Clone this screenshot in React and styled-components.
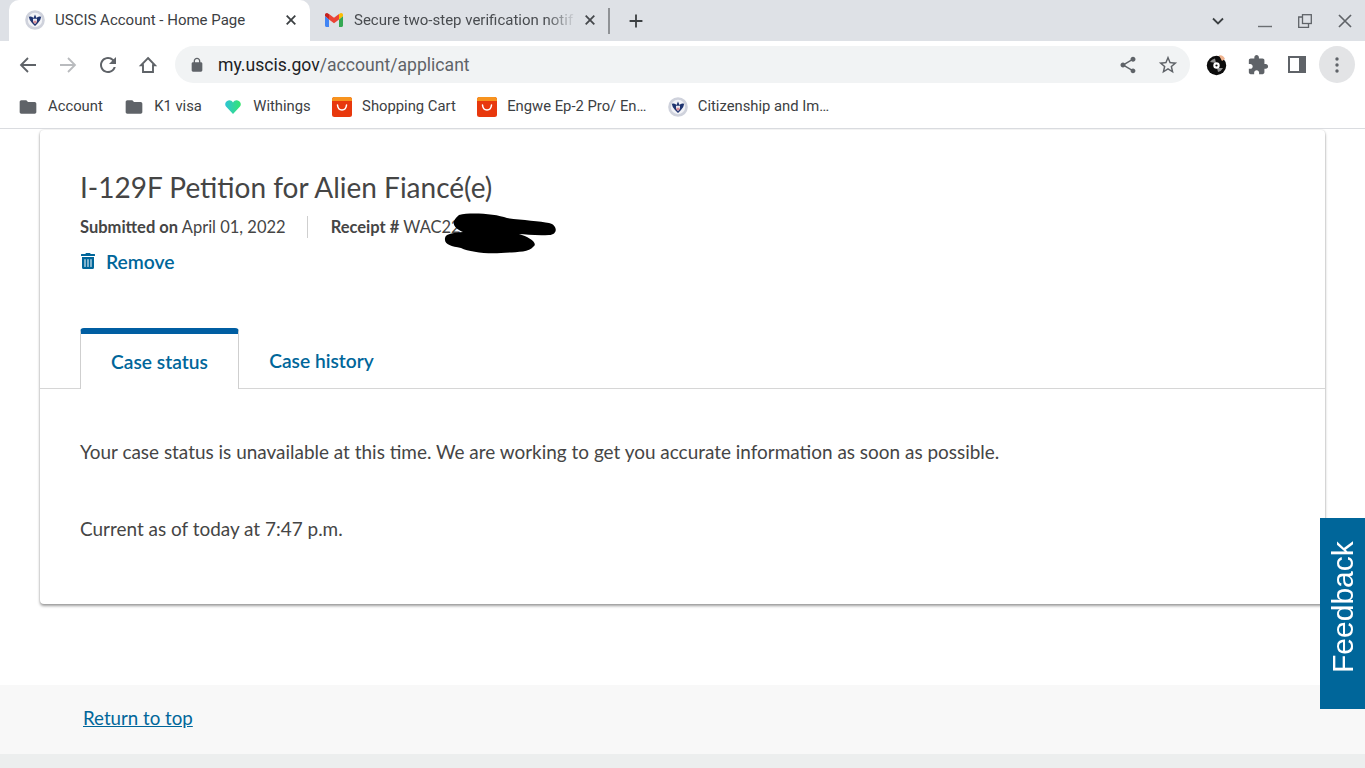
import React from 'react'
import styled, { createGlobalStyle } from 'styled-components'
import { FaTrashAlt } from 'react-icons/fa'

const GlobalStyle = createGlobalStyle`
    html, body {
        margin: 0;
        padding: 0;
        height: 768px;
        overflow: hidden;
        background: #fff;
    }
    * {
        box-sizing: border-box;
    }
`;

const Material = ({ d, size = 24, color = '#5f6368' }) => (
    <svg width={size} height={size} viewBox="0 0 24 24" fill={color}><path d={d} /></svg>
);

const paths = {
    refresh: 'M17.65 6.35A7.958 7.958 0 0 0 12 4c-4.42 0-7.99 3.58-7.99 8s3.57 8 7.99 8c3.73 0 6.84-2.55 7.73-6h-2.08A5.99 5.99 0 0 1 12 18c-3.31 0-6-2.69-6-6s2.69-6 6-6c1.66 0 3.14.69 4.22 1.78L13 11h7V4l-2.35 2.35z',
    lock: 'M18 8h-1V6c0-2.76-2.24-5-5-5S7 3.24 7 6v2H6c-1.1 0-2 .9-2 2v10c0 1.1.9 2 2 2h12c1.1 0 2-.9 2-2V10c0-1.1-.9-2-2-2zM9 6c0-1.66 1.34-3 3-3s3 1.34 3 3v2H9V6z',
    share: 'M18 16.08c-.76 0-1.44.3-1.96.77L8.91 12.7c.05-.23.09-.46.09-.7s-.04-.47-.09-.7l7.05-4.11c.54.5 1.25.81 2.04.81 1.66 0 3-1.34 3-3s-1.34-3-3-3-3 1.34-3 3c0 .24.04.47.09.7L8.04 9.81C7.5 9.31 6.79 9 6 9c-1.66 0-3 1.34-3 3s1.34 3 3 3c.79 0 1.5-.31 2.04-.81l7.12 4.16c-.05.21-.08.43-.08.65 0 1.61 1.31 2.92 2.92 2.92 1.61 0 2.92-1.31 2.92-2.92s-1.31-2.92-2.92-2.92z',
    star: 'M22 9.24l-7.19-.62L12 2 9.19 8.63 2 9.24l5.46 4.73L5.82 21 12 17.27 18.18 21l-1.63-7.03L22 9.24zM12 15.4l-3.76 2.27 1-4.28-3.32-2.88 4.38-.38L12 6.1l1.71 4.04 4.38.38-3.32 2.88 1 4.28L12 15.4z',
    puzzle: 'M20.5 11H19V7c0-1.1-.9-2-2-2h-4V3.5C13 2.12 11.88 1 10.5 1S8 2.12 8 3.5V5H4c-1.1 0-1.99.9-1.99 2v3.8H3.5c1.49 0 2.7 1.21 2.7 2.7s-1.21 2.7-2.7 2.7H2V20c0 1.1.9 2 2 2h3.8v-1.5c0-1.49 1.21-2.7 2.7-2.7 1.49 0 2.7 1.21 2.7 2.7V22H17c1.1 0 2-.9 2-2v-4h1.5c1.38 0 2.5-1.12 2.5-2.5S21.88 11 20.5 11z',
    folder: 'M10 4H4c-1.1 0-1.99.9-1.99 2L2 18c0 1.1.9 2 2 2h16c1.1 0 2-.9 2-2V8c0-1.1-.9-2-2-2h-8l-2-2z',
};

const Seal = ({ size = 20 }) => (
    <svg width={size} height={size} viewBox="0 0 20 20">
        <circle cx="10" cy="10" r="9.8" fill="#cfd2dc" />
        <circle cx="10" cy="10" r="7.2" fill="#f2f3f7" />
        <path d="M3.800 6.800 Q7 5.800 8.500 8 L10 4.500 L11.500 8 Q13 5.800 16.200 6.800 Q15.600 11 13 13 L10 16 L7 13 Q4.400 11 3.800 6.800 Z" fill="#1f3470" />
        <path d="M8 8.800 h4 v3 l-2 2.400 l-2 -2.400 Z" fill="#e9ebf2" />
        <path d="M8.700 10.700 h0.800 v2.600 h-0.800 Z M10.500 10.700 h0.800 v2.600 h-0.800 Z" fill="#c8313e" />
    </svg>
);

const GmailIcon = () => (
    <svg width="18" height="14" viewBox="0 0 18 14">
        <path d="M0 3v9.500C0 13.300.7 14 1.500 14H4V6.500Z" fill="#4285f4" />
        <path d="M14 6.500V14h2.500c.8 0 1.500-.7 1.500-1.500V3Z" fill="#34a853" />
        <path d="M14 1v5.500L18 3V1.800C18 .3 16.300 -.5 15.100 .4Z" fill="#fbbc04" />
        <path d="M4 6.500V1l5 3.700L14 1v5.500L9 10.200Z" fill="#ea4335" />
        <path d="M0 1.800V3l4 3.500V1L2.900 .4C1.700 -.5 0 .3 0 1.800Z" fill="#c5221f" />
    </svg>
);

const HeartIcon = () => (
    <svg width="16" height="14" viewBox="0 0 16 14">
        <defs>
            <linearGradient id="heartFill" x1="0" y1="0" x2="1" y2="0">
                <stop offset="0" stopColor="#2ec4d6" />
                <stop offset="1" stopColor="#35e56f" />
            </linearGradient>
        </defs>
        <path d="M8 14 L1 6.600 C-.6 4.600 .2 1 3.500 .4 C5.500 .1 7 1 8 2.500 C9 1 10.500 .1 12.500 .4 C15.800 1 16.600 4.600 15 6.600 Z" fill="url(#heartFill)" />
    </svg>
);

const ShopIcon = () => (
    <svg width="20" height="20" viewBox="0 0 20 20">
        <rect width="20" height="20" rx="2.500" fill="#e8380d" />
        <path d="M0 2.500 A2.500 2.500 0 0 1 2.500 0 H17.500 A2.500 2.500 0 0 1 20 2.500 V4 H0 Z" fill="#f7931e" />
        <path d="M5.500 8 C6 14.500 14 14.500 14.500 8" fill="none" stroke="#fff" strokeWidth="1.500" strokeLinecap="round" />
    </svg>
);

const DiscIcon = () => (
    <svg width="22" height="22" viewBox="0 0 22 22">
        <circle cx="10.500" cy="11.500" r="9.700" fill="#0c0c0c" />
        <path d="M4 8 A7.500 7.500 0 0 1 9 4.500 L10 9 Z M17 14 A7.500 7.500 0 0 1 12 18 L11 14 Z" fill="#8e8e8e" />
        <path d="M13 1.500 C15 .5 18 2 19 5 L16 7 Z" fill="#efb38f" />
        <circle cx="10.500" cy="11.500" r="3.200" fill="#fff" />
        <circle cx="10.500" cy="11.500" r="1.100" fill="#0c0c0c" />
    </svg>
);

const HomeIcon = () => (
    <svg width="20" height="20" viewBox="0 0 20 20" fill="none" stroke="#5f6368" strokeWidth="1.900" strokeLinejoin="miter">
        <path d="M10 3 L17 10.300 H15 V17 H5 V10.300 H3 Z" />
    </svg>
);

const Arrow = ({ color = '#5f6368', flip }) => (
    <svg width="20" height="20" viewBox="0 0 20 20" fill="none" stroke={color} strokeWidth="1.800" style={flip ? { transform: 'scaleX(-1)' } : undefined}>
        <path d="M18 10 H3 M10 3 L3 10 L10 17" />
    </svg>
);

const CloseGlyph = ({ size = 10, color = '#3c4043', width = 1.8 }) => (
    <svg width={size} height={size} viewBox="0 0 10 10" stroke={color} strokeWidth={width}>
        <path d="M.7 .7 L9.300 9.300 M9.300 .7 L.7 9.300" />
    </svg>
);

const Panel = () => (
    <svg width="18" height="17" viewBox="0 0 18 17">
        <path fillRule="evenodd" d="M0 0H18V17H0Z M2 2V15H11V2Z" fill="#5f6368" />
    </svg>
);

function App() {
    const bookmarks = [
        { icon: <Material d={paths.folder} size={22} />, label: 'Account' },
        { icon: <Material d={paths.folder} size={22} />, label: 'K1 visa' },
        { icon: <HeartIcon />, label: 'Withings' },
        { icon: <ShopIcon />, label: 'Shopping Cart' },
        { icon: <ShopIcon />, label: 'Engwe Ep-2 Pro/ En…' },
        { icon: <Seal />, label: 'Citizenship and Im…' },
    ];
    return (
        <>
            <GlobalStyle />
            <Browser>
                <TabStrip>
                    <ActiveTab>
                        <Seal />
                        <TabTitle>USCIS Account - Home Page</TabTitle>
                        <TabClose><CloseGlyph /></TabClose>
                    </ActiveTab>
                    <InactiveTab>
                        <GmailIcon />
                        <TabTitle muted>Secure two-step verification notif</TabTitle>
                        <TabClose><CloseGlyph color="#45484c" /></TabClose>
                    </InactiveTab>
                    <TabDivider />
                    <NewTab>
                        <Material d="M19 13h-6v6h-2v-6H5v-2h6V5h2v6h6v2z" color="#3c4043" size={22} />
                    </NewTab>
                    <WindowControls>
                        <ChevronBox>
                            <svg width="12" height="8" viewBox="0 0 12 8" fill="none" stroke="#3c4043" strokeWidth="1.800"><path d="M1 1.500 L6 6.500 L11 1.500" /></svg>
                        </ChevronBox>
                        <WindowButton>
                            <svg width="14" height="14" viewBox="0 0 14 14" stroke="#6b6e72" strokeWidth="1.400"><path d="M0 12.500 H14" /></svg>
                        </WindowButton>
                        <WindowButton>
                            <svg width="14" height="14" viewBox="0 0 14 14" fill="none" stroke="#5f6368" strokeWidth="1.300"><rect x="4.500" y=".7" width="8.800" height="8.800" /><path d="M4.500 3 H.7 V13.300 H10.500 V9.500" /></svg>
                        </WindowButton>
                        <WindowButton>
                            <CloseGlyph size={14} color="#5f6368" width={1.200} />
                        </WindowButton>
                    </WindowControls>
                </TabStrip>
                <Toolbar>
                    <ToolButton><Arrow /></ToolButton>
                    <ToolButton><Arrow color="#b9bbbe" flip /></ToolButton>
                    <ToolButton><Material d={paths.refresh} /></ToolButton>
                    <ToolButton><HomeIcon /></ToolButton>
                    <AddressBar>
                        <LockBox><Material d={paths.lock} size={16} /></LockBox>
                        <Url>my.uscis.gov<UrlPath>/account/applicant</UrlPath></Url>
                        <ToolButton><Material d={paths.share} size={20} /></ToolButton>
                        <ToolButton><Material d={paths.star} size={22} /></ToolButton>
                    </AddressBar>
                    <ToolButton><DiscIcon /></ToolButton>
                    <PuzzleButton><Material d={paths.puzzle} size={22} /></PuzzleButton>
                    <ToolButton><Panel /></ToolButton>
                    <MenuButton>
                        <svg width="4" height="16" viewBox="0 0 4 16" fill="#5f6368">
                            <circle cx="2" cy="2" r="1.700" /><circle cx="2" cy="8" r="1.700" /><circle cx="2" cy="14" r="1.700" />
                        </svg>
                    </MenuButton>
                </Toolbar>
                <BookmarkBar>
                    {bookmarks.map((item) => (
                        <Bookmark key={item.label}>
                            <BookmarkIcon>{item.icon}</BookmarkIcon>
                            <BookmarkLabel>{item.label}</BookmarkLabel>
                        </Bookmark>
                    ))}
                </BookmarkBar>
            </Browser>
            <Page>
                <Card>
                    <CardHead>
                        <Title>I-129F Petition for Alien Fiancé(e)</Title>
                        <MetaRow>
                            <MetaItem><strong>Submitted on</strong> April 01, 2022</MetaItem>
                            <MetaDivider />
                            <MetaItem>
                                <strong>Receipt #</strong> WAC229
                                <Scribble width="120" height="48" viewBox="0 0 120 48">
                                    <path d="M18 6 C30 3 55 5 66 9 C80 11 100 12 108 14 C117 16 117 26 108 26 C95 27 85 25 78 25 C88 28 98 34 92 38 C88 44 70 43 60 44 C45 45 28 43 20 39 C10 37 3 36 4 29 C5 24 14 24 22 23 C14 20 8 14 18 6 Z" fill="#000" />
                                </Scribble>
                            </MetaItem>
                        </MetaRow>
                        <RemoveLink><FaTrashAlt size={16} /> Remove</RemoveLink>
                    </CardHead>
                    <TabRow>
                        <CaseTab active>Case status</CaseTab>
                        <CaseTab>Case history</CaseTab>
                    </TabRow>
                    <CardBody>
                        <BodyText>Your case status is unavailable at this time. We are working to get you accurate information as soon as possible.</BodyText>
                        <BodyText>Current as of today at 7:47 p.m.</BodyText>
                    </CardBody>
                </Card>
            </Page>
            <ReturnBand>
                <ReturnLink href="#top">Return to top</ReturnLink>
            </ReturnBand>
            <FooterStrip />
            <FeedbackTab>Feedback</FeedbackTab>
        </>
    )
}

const Browser = styled.div`
    font-family: Roboto, "Liberation Sans", sans-serif;
    border-bottom: 1px solid #dadce0;
    height: 129px;
`;
const TabStrip = styled.div`
    display: flex;
    align-items: flex-end;
    height: 41px;
    background: #dee1e6;
    padding-left: 9px;
`;
const ActiveTab = styled.div`
    display: flex;
    align-items: center;
    width: 301px;
    height: 41px;
    padding: 0 14px 1px 16px;
    background: #fff;
    border-radius: 10px 10px 0 0;
    color: #3c4043;
`;
const InactiveTab = styled.div`
    display: flex;
    align-items: center;
    width: 298px;
    height: 41px;
    padding: 0 13px 1px 15px;
    overflow: hidden;
`;
const TabTitle = styled.span`
    flex: 1;
    margin-left: ${(props) => (props.muted ? '11px' : '10px')};
    font-size: 15px;
    white-space: nowrap;
    overflow: hidden;
    color: ${(props) => (props.muted ? '#494c50' : '#3c4043')};
    mask-image: ${(props) => (props.muted ? 'linear-gradient(90deg, #000 86%, transparent 100%)' : 'none')};
`;
const TabClose = styled.span`
    display: flex;
    margin-left: 8px;
`;
const TabDivider = styled.div`
    width: 2px;
    height: 26px;
    margin: 0 0 7px 0;
    background: #8f9296;
`;
const NewTab = styled.div`
    display: flex;
    margin: 0 0 9px 15px;
`;
const WindowControls = styled.div`
    display: flex;
    align-items: center;
    height: 41px;
    margin-left: auto;
`;
const ChevronBox = styled.div`
    display: flex;
    justify-content: center;
    width: 40px;
    margin-right: 7px;
`;
const WindowButton = styled.div`
    display: flex;
    justify-content: center;
    width: 40px;
`;
const Toolbar = styled.div`
    display: flex;
    align-items: center;
    height: 47px;
    padding-left: 8px;
    background: #fff;
`;
const ToolButton = styled.div`
    display: flex;
    align-items: center;
    justify-content: center;
    flex: none;
    width: 40px;
    height: 36px;
`;
const PuzzleButton = styled(ToolButton)`
    padding-left: 2px;
`;
const AddressBar = styled.div`
    display: flex;
    align-items: center;
    flex: none;
    width: 1015px;
    height: 37px;
    margin: 0 7px;
    padding-right: 2px;
    background: #f1f3f4;
    border-radius: 19px;
`;
const LockBox = styled.div`
    display: flex;
    width: 43px;
    padding-left: 14px;
`;
const Url = styled.div`
    flex: 1;
    font-size: 17.6px;
    color: #202124;
`;
const UrlPath = styled.span`
    color: #5f6368;
`;
const MenuButton = styled.div`
    display: flex;
    align-items: center;
    justify-content: center;
    width: 36px;
    height: 37px;
    margin-left: 2px;
    background: #e3e4e6;
    border-radius: 50%;
`;
const BookmarkBar = styled.div`
    display: flex;
    align-items: center;
    gap: 21.4px;
    height: 40px;
    padding-left: 18px;
    background: #fff;
    font-size: 14.8px;
    color: #3c4043;
`;
const Bookmark = styled.div`
    display: flex;
    align-items: center;
    gap: 10px;
    white-space: nowrap;
`;
const BookmarkIcon = styled.span`
    display: flex;
    align-items: center;
    justify-content: center;
    width: 20px;
    margin-top: -3px;
`;
const BookmarkLabel = styled.span`
    margin-top: -4px;
`;
const Page = styled.div`
    height: 556px;
    padding: 1px 40px 0;
    font-family: Lato, "Open Sans", sans-serif;
    color: #454545;
`;
const Card = styled.div`
    display: flex;
    flex-direction: column;
    height: 474px;
    background: #fff;
    border-radius: 4px;
    box-shadow: 0 2px 3px rgba(0, 0, 0, 0.38), 0 0 2px rgba(0, 0, 0, 0.14);
`;
const CardHead = styled.div`
    padding: 39px 40px 0;
`;
const Title = styled.h1`
    margin: 0;
    font-size: 28px;
    line-height: 36px;
    font-weight: 400;
`;
const MetaRow = styled.div`
    display: flex;
    align-items: center;
    height: 22px;
    margin-top: 11px;
    font-size: 16.5px;
`;
const MetaItem = styled.div`
    position: relative;
    white-space: nowrap;
    strong {
        font-weight: 700;
    }
`;
const MetaDivider = styled.div`
    width: 1px;
    height: 22px;
    margin: 0 23px 0 21px;
    background: #cfcfcf;
`;
const Scribble = styled.svg`
    position: absolute;
    left: 110px;
    top: -8px;
`;
const RemoveLink = styled.a`
    display: flex;
    align-items: center;
    gap: 10px;
    height: 24px;
    margin-top: 11px;
    font-size: 19.3px;
    font-weight: 600;
    color: #00669a;
`;
const TabRow = styled.div`
    display: flex;
    height: 61px;
    margin-top: 55px;
    padding-left: 40px;
    border-bottom: 1px solid #d6d6d6;
`;
const CaseTab = styled.div`
    display: flex;
    align-items: center;
    justify-content: center;
    height: ${(props) => (props.active ? '61px' : '60px')};
    width: ${(props) => (props.active ? '159px' : '165px')};
    padding-top: ${(props) => (props.active ? '0' : '5px')};
    font-size: 19.2px;
    font-weight: 600;
    color: #00669a;
    background: #fff;
    border-radius: 4px 4px 0 0;
    ${(props) => props.active && `
        border: 1px solid #cfcfcf;
        border-top: 6px solid #005ea2;
        border-bottom: 0;
    `}
`;
const CardBody = styled.div`
    padding: 50px 40px 0;
`;
const BodyText = styled.p`
    margin: 0 0 52px;
    font-size: 18.95px;
    line-height: 25px;
`;
const ReturnBand = styled.div`
    display: flex;
    align-items: center;
    height: 69px;
    padding: 0 0 3px 83px;
    background: #f8f8f8;
    font-family: Lato, "Open Sans", sans-serif;
`;
const ReturnLink = styled.a`
    font-size: 18.7px;
    color: #00669a;
    text-decoration: underline;
`;
const FooterStrip = styled.div`
    height: 14px;
    background: #eceeee;
`;
const FeedbackTab = styled.div`
    position: fixed;
    right: 0;
    top: 518px;
    display: flex;
    align-items: center;
    justify-content: center;
    width: 45px;
    height: 191px;
    padding: 13px 2px 0 0;
    background: #00669a;
    color: #fff;
    font-family: "Liberation Sans", Arial, sans-serif;
    font-size: 30px;
    writing-mode: vertical-rl;
    transform: rotate(180deg);
`;

export default App;
